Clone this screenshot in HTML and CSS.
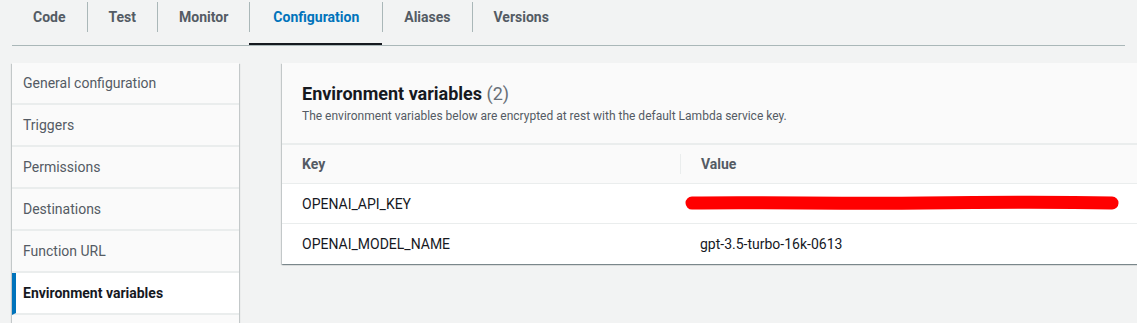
FILE: index.html
```html
<!DOCTYPE html>
<html lang="en">
<head>
  <meta name="viewport" content="width=device-width, initial-scale=1">
  <link rel="stylesheet" href="styles.css">
  <title>Configuration</title>
</head>
<body>

<!-- Tabs -->
<div class="tabs">
  <div class="tab"><span class="tab-label">Code</span></div>
  <div class="tab"><span class="tab-label">Test</span></div>
  <div class="tab"><span class="tab-label">Monitor</span></div>
  <div class="tab active"><span class="tab-label">Configuration</span></div>
  <div class="tab"><span class="tab-label">Aliases</span></div>
  <div class="tab"><span class="tab-label">Versions</span></div>
</div>

<div class="layout">
  <!-- Left navigation -->
  <ul class="side-nav">
    <li>General configuration</li>
    <li>Triggers</li>
    <li>Permissions</li>
    <li>Destinations</li>
    <li>Function URL</li>
    <li class="active">Environment variables</li>
    <li></li>
  </ul>

  <!-- Environment variables card -->
  <div class="card">
    <div class="card-header">
      <h2>Environment variables <span class="count">(2)</span></h2>
      <p>The environment variables below are encrypted at rest with the default Lambda service key.</p>
    </div>
    <div class="env-table">
      <div class="env-row head">
        <div class="cell">Key</div>
        <div class="cell value"><span class="col-sep">Value</span></div>
      </div>
      <div class="env-row">
        <div class="cell">OPENAI_API_KEY</div>
        <div class="cell value">
          <svg class="redact" width="440" height="20" viewBox="0 0 440 20">
            <path d="M8 9 C 80 8, 160 10, 240 9 S 380 8, 428 9" stroke="#ff0000" stroke-width="13" stroke-linecap="round" fill="none"/>
          </svg>
        </div>
      </div>
      <div class="env-row">
        <div class="cell">OPENAI_MODEL_NAME</div>
        <div class="cell value">gpt-3.5-turbo-16k-0613</div>
      </div>
    </div>
  </div>
</div>

</body>
</html>
```

FILE: styles.css
```css
body {
  font-family: Roboto, "Liberation Sans", Arial, sans-serif;
  font-size: 14px;
  background-color: #f2f3f3;
  color: #16191f;
  margin: 0;
  padding: 0 12px;
  overflow: hidden;
}
.tabs {
  display: flex;
  border-bottom: 1px solid #aab7b8;
  height: 45px;
}
.tab {
  box-sizing: border-box;
  height: 45px;
  padding-top: 2px;
  border-bottom: 2px solid transparent;
}
.tab-label {
  display: block;
  padding: 5px 21px;
  line-height: 20px;
  font-weight: bold;
  color: #545b64;
  border-left: 1px solid #aab7b8;
}
.tab:first-child .tab-label {
  border-left: none;
}
.tab.active {
  border-bottom-color: #16191f;
}
.tab.active .tab-label {
  color: #0073bb;
  padding: 5px 23px;
}
.layout {
  display: flex;
  align-items: flex-start;
  gap: 43px;
  margin-top: 17px;
  margin-right: -30px;
}
.side-nav {
  list-style: none;
  margin: 0;
  padding: 0;
  width: 227px;
  flex-shrink: 0;
  background-color: #fafafa;
  box-shadow: 0 1px 1px 0 rgba(0, 28, 36, 0.3), 1px 1px 1px 0 rgba(0, 28, 36, 0.15), -1px 1px 1px 0 rgba(0, 28, 36, 0.15);
}
.side-nav li {
  height: 40px;
  line-height: 40px;
  padding-left: 11px;
  color: #545b64;
  border-bottom: 2px solid #eaeded;
}
.side-nav li.active {
  background-color: #fff;
  color: #16191f;
  font-weight: bold;
  border-left: 4px solid #0073bb;
  padding-left: 7px;
}
.card {
  flex: 1;
  background-color: #fff;
  box-shadow: 0 1px 1px 0 rgba(0, 28, 36, 0.3), 1px 1px 1px 0 rgba(0, 28, 36, 0.15), -1px 1px 1px 0 rgba(0, 28, 36, 0.15);
}
.card-header {
  background-color: #fafafa;
  padding: 20px 20px 19px;
  border-bottom: 2px solid #eaeded;
}
.card-header h2 {
  margin: 0;
  font-size: 18px;
  line-height: 22px;
  font-weight: bold;
}
.card-header .count {
  font-weight: normal;
  color: #687078;
}
.card-header p {
  margin: 3px 0 0;
  font-size: 12px;
  line-height: 16px;
  color: #545b64;
}
.env-row {
  display: grid;
  grid-template-columns: 398px 1fr;
  height: 39px;
  border-bottom: 1px solid #eaeded;
}
.env-row:last-child {
  border-bottom: none;
  height: 40px;
}
.env-row.head {
  height: 38px;
  background-color: #fafafa;
  font-weight: bold;
  color: #545b64;
}
.cell {
  display: flex;
  align-items: center;
  padding-left: 20px;
}
.env-row.head .value {
  padding-left: 0;
}
.col-sep {
  border-left: 1px solid #eaeded;
  padding-left: 20px;
  line-height: 20px;
}
.redact {
  margin-left: -16px;
}
```
